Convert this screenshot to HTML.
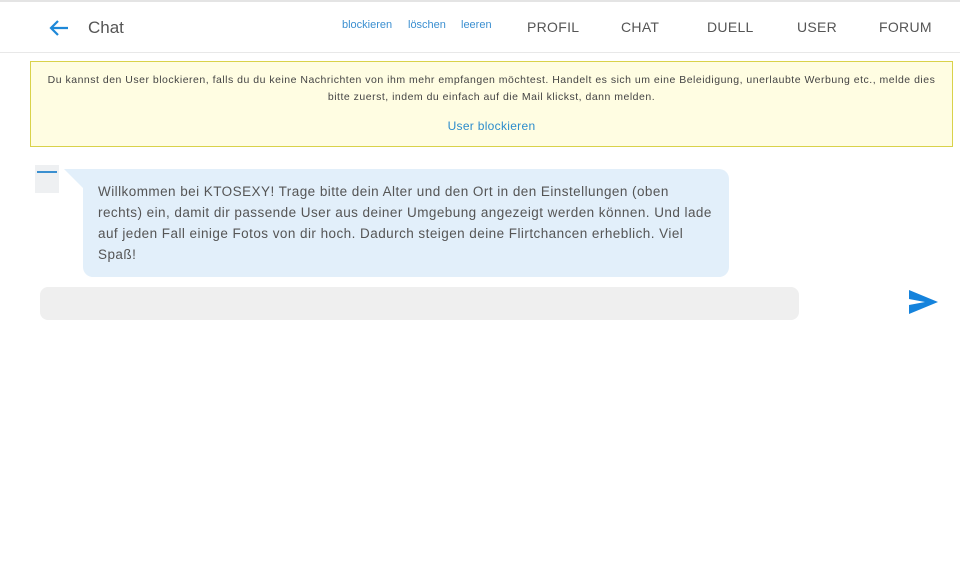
<!DOCTYPE html>
<html><head><meta charset="utf-8"><style>
*{margin:0;padding:0;box-sizing:border-box}
body{width:960px;height:561px;background:#fff;font-family:"Liberation Sans",sans-serif;position:relative;overflow:hidden;color:#555}
.top{position:absolute;left:0;top:0;width:960px;height:2px;background:#e4e4e4}
.hdr{position:absolute;left:0;top:52px;width:960px;height:1px;background:#e8e8e8}
.abs{position:absolute;white-space:nowrap}
.lnk{color:#3b8fd0;font-size:11px}
.nav{font-size:14px;color:#555;letter-spacing:0.3px}
.note{position:absolute;left:30px;top:61px;width:923px;height:86px;background:#fffde2;border:1px solid #d9d24a;text-align:center;font-size:10.5px;color:#444;line-height:17px;padding-top:10px;letter-spacing:0.5px}
.bubble{position:absolute;left:83px;top:169px;width:646px;height:108px;background:#e2effa;border-radius:0 10px 10px 10px;padding:12px 15px;font-size:13.5px;line-height:21px;color:#555;letter-spacing:0.45px}
.tail{position:absolute;left:64px;top:169px;width:0;height:0;border-top:20px solid #e2effa;border-left:20px solid transparent}
.input{position:absolute;left:40px;top:287px;width:759px;height:33px;background:#efefef;border-radius:8px}
</style></head><body>
<div class="top"></div>
<svg class="abs" style="left:49px;top:19px" width="20" height="18" viewBox="0 0 20 18"><path d="M19 9H3M9 2L2 9l7 7" fill="none" stroke="#1e88d8" stroke-width="2.2"/></svg>
<div class="abs" style="left:88px;top:18px;font-size:17px;color:#555">Chat</div>
<div class="abs lnk" style="left:342px;top:19px">blockieren</div>
<div class="abs lnk" style="left:408px;top:19px">löschen</div>
<div class="abs lnk" style="left:461px;top:19px">leeren</div>
<div class="abs nav" style="left:527px;top:19px">PROFIL</div>
<div class="abs nav" style="left:621px;top:19px">CHAT</div>
<div class="abs nav" style="left:707px;top:19px">DUELL</div>
<div class="abs nav" style="left:797px;top:19px">USER</div>
<div class="abs nav" style="left:879px;top:19px">FORUM</div>
<div class="hdr"></div>
<div class="note">Du kannst den User blockieren, falls du du keine Nachrichten von ihm mehr empfangen möchtest. Handelt es sich um eine Beleidigung, unerlaubte Werbung etc., melde dies<br>bitte zuerst, indem du einfach auf die Mail klickst, dann melden.<div style="margin-top:12px;font-size:12px;color:#2d8ccc;letter-spacing:0.3px">User blockieren</div></div>
<div class="abs" style="left:35px;top:165px;width:24px;height:28px;background:#eef0f2"><div style="margin:6px 2px 0;height:2px;background:#3a8fd0"></div></div>
<div class="tail"></div>
<div class="bubble">Willkommen bei KTOSEXY! Trage bitte dein Alter und den Ort in den Einstellungen (oben<br>rechts) ein, damit dir passende User aus deiner Umgebung angezeigt werden können. Und lade<br>auf jeden Fall einige Fotos von dir hoch. Dadurch steigen deine Flirtchancen erheblich. Viel<br>Spaß!</div>
<div class="input"></div>
<svg class="abs" style="left:909px;top:290px" width="29" height="24" viewBox="0 0 29 24"><path d="M0 0L29 12L0 24L0 15L16 12L0 9Z" fill="#1583dc"/></svg>
</body></html>
